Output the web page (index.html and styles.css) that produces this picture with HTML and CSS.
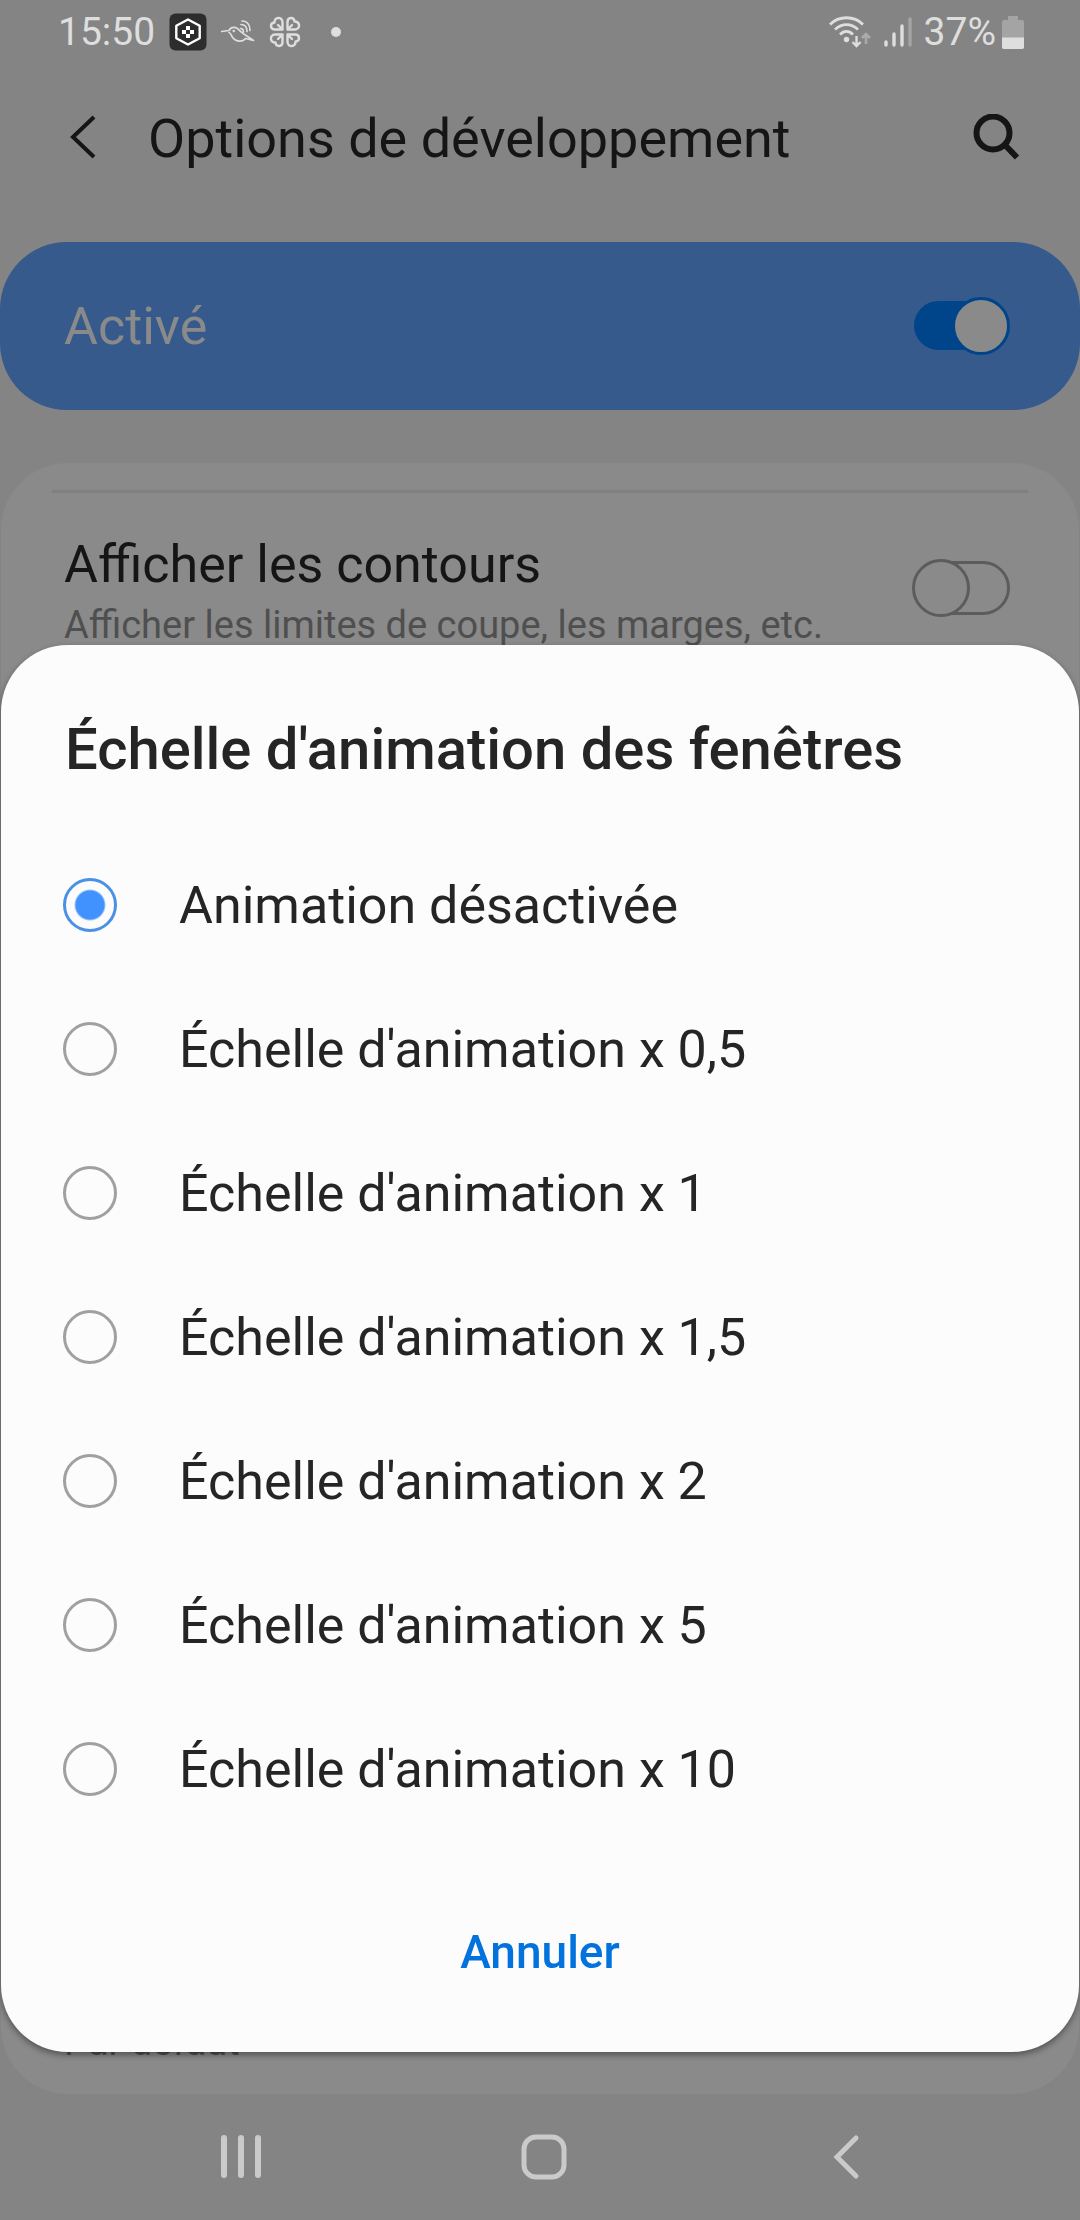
FILE: index.html
```
<!DOCTYPE html>
<html lang="fr">
<head>
  <meta charset="UTF-8" />
  <meta name="viewport" content="width=device-width, initial-scale=1.0"/>
  <title>Options de développement</title>
  <link rel="stylesheet" href="styles.css">
</head>
<body>

  <div class="status-bar">
    <div class="status-left">
      <span class="time">15:50</span>
      <svg class="icon-app" width="38" height="38" viewBox="0 0 38 38">
        <rect x="0.5" y="0.5" width="37" height="37" rx="6" fill="#2d2d2d"/>
        <path d="M19 6.500l11.700 6.300v12.400L19 31.500 7.300 25.200V12.800z" fill="none" stroke="#fff" stroke-width="2.400" stroke-linejoin="round"/>
        <path d="M17 13h4v4h-4zM17 21h4v4h-4zM13 17h4v4h-4zM21 17h4v4h-4z" fill="#fff"/>
      </svg>
      <svg class="icon-bird" width="34" height="24" viewBox="0 0 34 24" fill="none" stroke="#dedede" stroke-width="1.700" stroke-linecap="round" stroke-linejoin="round">
        <path d="M0.500 11.500L8 10.500C10 6.500 15 6.500 17.500 9.500 20.500 13 26 16 32.500 20.500L24.500 18.500C21.500 22.500 14.500 22 11 16.500 10 14.500 9.500 13 8 12.500"/>
        <circle cx="12.800" cy="11" r="0.500"/>
        <path d="M19.500 8.500c2 0 3 1.500 3 3.500M20 4.500c4 0 6 3 6 7M21 1c5.500 0 8 4.500 8 9.500"/>
      </svg>
      <svg class="icon-clover" width="32" height="32" viewBox="0 0 32 32" fill="none" stroke="#dedede" stroke-width="2.400" stroke-linejoin="round" stroke-linecap="round">
        <path id="leaf" d="M13.500 13.500H6C1 13.500 .5 7 5.500 6.500 5 1 13 0 13.500 6zM13.500 13.500L9 9"/>
        <use href="#leaf" transform="rotate(90 16 16)"/>
        <use href="#leaf" transform="rotate(180 16 16)"/>
        <use href="#leaf" transform="rotate(270 16 16)"/>
      </svg>
      <span class="more-dot"></span>
    </div>
    <div class="status-right">
      <svg class="icon-wifi" width="43" height="34" viewBox="0 0 43 34" fill="none" stroke="#dedede" stroke-width="2.800">
        <path d="M1 9.500c9-9 24-9 33 0M6 14.500c7-6.500 16-6.500 23 0M11 19.500c4-4 9-4 13 0"/>
        <circle cx="17.500" cy="24.500" r="2.700" fill="#dedede" stroke="none"/>
        <path d="M27.500 21v10M23.500 27l4 4 4-4" stroke-width="2.400"/>
        <path d="M37 29V19.500M33 23l4-4 4 4" stroke="#aaa" stroke-width="2.600"/>
      </svg>
      <svg class="icon-signal" width="28" height="32" viewBox="0 0 28 32" stroke="#dedede" stroke-width="3.400" stroke-linecap="round">
        <path d="M2 26v3M10 18v11M18 10v19"/>
        <path d="M26 3v26" stroke="#a4a4a4"/>
      </svg>
      <span class="battery-text">37%</span>
      <svg class="icon-battery" width="22" height="34" viewBox="0 0 22 34">
        <path d="M6 5V1.500Q6 1 7 1h8q1 0 1 .5V5h4q2 0 2 2v25q0 2-2 2H2q-2 0-2-2V7q0-2 2-2z" fill="#a4a4a4"/>
        <path d="M0 22.500h22V32q0 2-2 2H2q-2 0-2-2z" fill="#dedede"/>
      </svg>
    </div>
  </div>

  <header>
    <button class="icon-btn" aria-label="Retour">
      <svg width="40" height="48" viewBox="0 0 40 48"><path d="M30 3L9 23l21 20" fill="none" stroke="#151515" stroke-width="4"/></svg>
    </button>
    <h1>Options de développement</h1>
    <button class="icon-btn" aria-label="Rechercher">
      <svg width="48" height="48" viewBox="0 0 48 48"><circle cx="21" cy="19" r="16.500" fill="none" stroke="#151515" stroke-width="6"/><path d="M32.500 30.500L45 43.500" stroke="#151515" stroke-width="6"/></svg>
    </button>
  </header>

  <main>
    <div class="master">
      <label for="devOptions">Activé</label>
      <input type="checkbox" role="switch" class="switch" id="devOptions" checked>
    </div>

    <div class="card">
      <div class="setting">
        <label for="bounds">
          <span class="setting-title">Afficher les contours</span>
          <span class="setting-sub">Afficher les limites de coupe, les marges, etc.</span>
        </label>
        <input type="checkbox" role="switch" class="switch" id="bounds">
      </div>
      <span class="setting-sub last-sub">Par défaut</span>
    </div>
  </main>

  <nav>
    <button aria-label="Applications récentes">
      <svg width="48" height="48" viewBox="0 0 48 48" stroke="#cacaca" stroke-width="6" stroke-linecap="round"><path d="M7 5v37M24 5v37M41 5v37"/></svg>
    </button>
    <button aria-label="Accueil">
      <svg width="48" height="48" viewBox="0 0 48 48" fill="none" stroke="#cacaca" stroke-width="5"><rect x="4" y="4" width="40" height="40" rx="12"/></svg>
    </button>
    <button aria-label="Retour">
      <svg width="48" height="48" viewBox="0 0 48 48" fill="none" stroke="#cacaca" stroke-width="5" stroke-linecap="round"><path d="M33 5L14 24l19 19"/></svg>
    </button>
  </nav>

  <!-- Scale picker -->
  <div class="modal">
    <form class="modal-content" role="dialog" aria-labelledby="modalTitle">
      <h2 id="modalTitle">Échelle d'animation des fenêtres</h2>
      <div class="options">
        <label><input type="radio" name="scale" value="0" checked>Animation désactivée</label>
        <label><input type="radio" name="scale" value="0.5">Échelle d'animation x 0,5</label>
        <label><input type="radio" name="scale" value="1">Échelle d'animation x 1</label>
        <label><input type="radio" name="scale" value="1.5">Échelle d'animation x 1,5</label>
        <label><input type="radio" name="scale" value="2">Échelle d'animation x 2</label>
        <label><input type="radio" name="scale" value="5">Échelle d'animation x 5</label>
        <label><input type="radio" name="scale" value="10">Échelle d'animation x 10</label>
      </div>
      <button type="button" class="cancel-btn">Annuler</button>
    </form>
  </div>

</body>
</html>
```
FILE: styles.css
```
*,
*::before,
*::after {
  box-sizing: border-box;
}

body {
  margin: 0;
  min-height: 100vh;
  display: flex;
  flex-direction: column;
  font-family: Roboto, sans-serif;
  font-size: 52px;
  background: #848484;
  color: #151515;
}

button {
  background: none;
  border: none;
  padding: 0;
  font-family: inherit;
  cursor: pointer;
}

svg {
  display: block;
}

.status-bar {
  height: 64px;
  padding: 0 56px 0 58px;
  display: flex;
  justify-content: space-between;
  color: #dedede;
  font-size: 39px;
  line-height: 64px;
}

.status-left,
.status-right {
  display: flex;
  align-items: center;
}

.status-left {
  gap: 14px;
}

.status-right {
  gap: 6px;
}

.icon-clover {
  margin-right: 12px;
}

.icon-signal {
  margin: 0 6px;
}

.more-dot {
  width: 10px;
  height: 10px;
  margin-left: 4px;
  border-radius: 50%;
  background: #dedede;
}

header {
  height: 178px;
  padding: 0 60px 30px 64px;
  display: flex;
  align-items: center;
}

h1 {
  flex: 1;
  margin: 0 0 0 44px;
  font-size: 54px;
  font-weight: 400;
}

main {
  flex: 1;
  display: flex;
  flex-direction: column;
}

.master {
  height: 168px;
  padding: 0 70px 0 64px;
  display: flex;
  align-items: center;
  justify-content: space-between;
  border-radius: 67px;
  background: #365a8c;
  color: #8a8a8a;
}

.card {
  flex: 1;
  margin: 53px 1px 0;
  padding: 27px 51px 24px;
  display: flex;
  flex-direction: column;
  justify-content: space-between;
  border-radius: 67px;
  background: #8a8a8a;
}

.setting {
  padding: 30px 18px 0 12px;
  display: flex;
  align-items: center;
  justify-content: space-between;
  border-top: 3px solid #808080;
}

.setting label {
  padding-top: 10px;
}

.setting-title,
.setting-sub {
  display: block;
}

.setting-title {
  line-height: 64px;
}

.setting-sub {
  color: #4f4f4f;
  font-size: 38px;
  line-height: 56px;
}

.last-sub {
  padding-left: 12px;
}

/* Switches */
.switch {
  appearance: none;
  position: relative;
  flex: none;
  width: 98px;
  height: 58px;
  margin: 0;
  cursor: pointer;
}

.switch::before,
.switch::after {
  content: "";
  position: absolute;
  border: 3px solid #5c5c5c;
}

.switch::before {
  inset: 2px 0 2px 8px;
  border-radius: 27px;
}

.switch::after {
  top: 0;
  left: 0;
  width: 58px;
  height: 58px;
  border-radius: 50%;
  background: #8a8a8a;
}

.switch:checked::before {
  inset: 4px 6px 5px 2px;
  border-color: #00458a;
  background: #00458a;
}

.switch:checked::after {
  left: 40px;
  border-color: #00458a;
}

nav {
  height: 126px;
  padding: 0 82px 0 90px;
  display: flex;
  align-items: center;
}

nav button {
  flex: 1;
  display: flex;
  justify-content: center;
}

/* Dialog */
.modal {
  position: fixed;
  inset: 0;
  padding: 0 1px 168px;
  display: flex;
  align-items: flex-end;
}

.modal-content {
  width: 100%;
  padding: 68px 62px 60px;
  border-radius: 67px;
  background: #fcfcfc;
  color: #252525;
  box-shadow: 0 3px 6px rgba(0,0,0,0.4);
}

h2 {
  margin: 0 0 48px;
  padding-left: 2px;
  font-size: 58px;
  font-weight: 500;
  line-height: 72px;
}

.options label {
  height: 144px;
  display: flex;
  align-items: center;
  gap: 62px;
  cursor: pointer;
}

.options input {
  appearance: none;
  width: 54px;
  height: 54px;
  margin: 0;
  border: 3px solid #a0a0a0;
  border-radius: 50%;
}

.options input:checked {
  border-color: #4a90e6;
  background: radial-gradient(circle, #4192ff 14px, transparent 16px);
}

.cancel-btn {
  display: block;
  margin: 71px auto 0;
  color: #0272dc;
  font-size: 46px;
  font-weight: 500;
  line-height: 80px;
}
```
